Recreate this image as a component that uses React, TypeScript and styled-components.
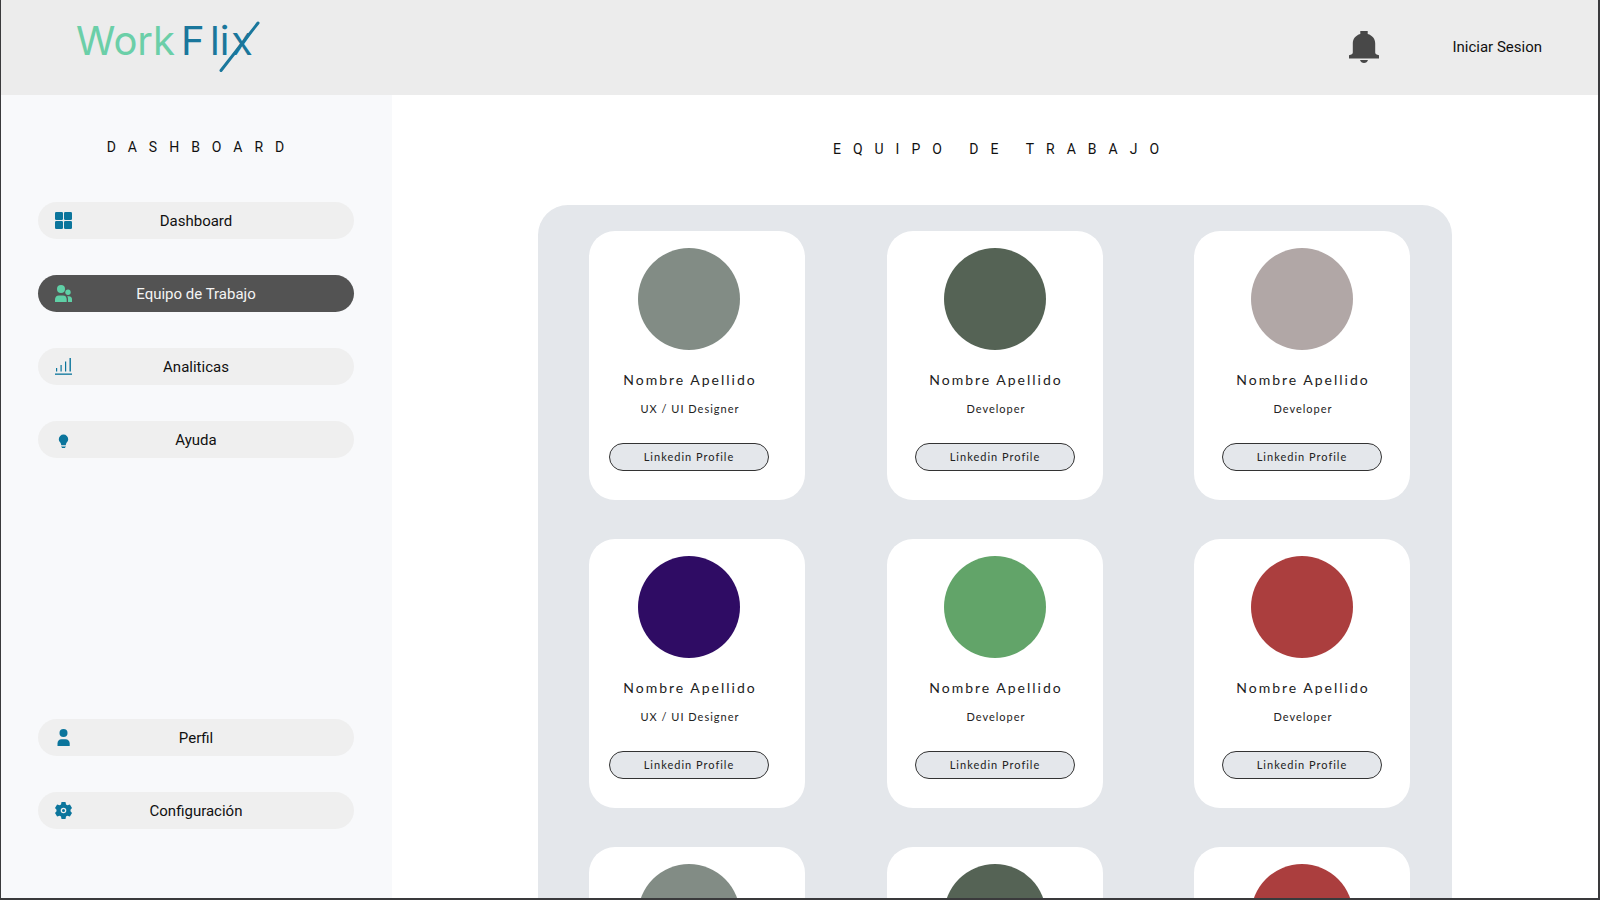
import React from 'react';
import styled, { createGlobalStyle } from 'styled-components';

const GlobalStyle = createGlobalStyle`
  * { box-sizing: border-box; }
  html, body { margin: 0; }
  body {
    font-family: Roboto, "Liberation Sans", sans-serif;
    color: #111;
    background: #fff;
  }
`;

const Page = styled.div`
  display: flex;
  flex-direction: column;
  height: 100vh;
  overflow: hidden;
  border: solid #3a3a3c;
  border-width: 0 2px 2px 1px;
`;

const Header = styled.header`
  display: flex;
  align-items: center;
  flex: none;
  height: 95px;
  padding: 0 56px 2px 71px;
  background: #ececec;
`;

const Brand = styled.a`
  display: flex;
  margin-right: auto;
`;

const LogoText = styled.text`
  font-family: Inter, Lato, sans-serif;
  font-size: 40px;
  font-weight: 400;
`;

const BellButton = styled.button`
  display: flex;
  margin-right: 73px;
  padding: 0;
  border: 0;
  background: none;
`;

const LoginLink = styled.a`
  font-size: 15px;
  line-height: 20px;
  color: #111;
  text-decoration: none;
`;

const Body = styled.div`
  display: flex;
  flex: 1;
  min-height: 0;
`;

const Sidebar = styled.aside`
  display: flex;
  flex-direction: column;
  flex: none;
  width: 391px;
  padding: 42px 38px 69px 37px;
  background: #f8f9fb;
`;

const SidebarTitle = styled.h2`
  margin: 0 0 45px;
  padding-left: 11px;
  font-size: 14px;
  line-height: 20px;
  font-weight: 400;
  letter-spacing: 12px;
  text-align: center;
`;

const Nav = styled.nav`
  display: flex;
  flex-direction: column;
  flex: 1;
  gap: 36px;
`;

const NavItem = styled.a<{ $active?: boolean; $pushDown?: boolean }>`
  display: flex;
  align-items: center;
  height: 37px;
  margin-top: ${(p) => (p.$pushDown ? 'auto' : '0')};
  padding: 0 17px;
  border-radius: 19px;
  background: ${(p) => (p.$active ? '#535353' : '#efefef')};
  color: ${(p) => (p.$active ? '#f4f4f4' : '#111')};
  font-size: 15px;
  line-height: 20px;
  text-decoration: none;

  svg {
    flex: none;
    fill: ${(p) => (p.$active ? '#5fd0a6' : '#0b759c')};
  }
`;

const NavLabel = styled.span`
  flex: 1;
  padding-right: 17px;
  text-align: center;
`;

const Main = styled.main`
  flex: 1;
  overflow: hidden;
  padding-top: 44px;
`;

const MainTitle = styled.h1`
  margin: 0 0 46px;
  padding-left: 14px;
  font-size: 14px;
  line-height: 20px;
  font-weight: 400;
  letter-spacing: 12px;
  text-align: center;
`;

const TeamPanel = styled.section`
  display: grid;
  grid-template-columns: 298fr 307fr 216fr;
  row-gap: 39px;
  max-width: 914px;
  margin: 0 auto;
  padding: 26px 42px 39px 51px;
  border-radius: 30px;
  background: #e4e7eb;
`;

const Card = styled.article`
  display: flex;
  flex-direction: column;
  align-items: center;
  width: 216px;
  height: 269px;
  padding-top: 17px;
  border-radius: 26px;
  background: #fff;
  font-family: Lato, "Noto Sans", sans-serif;
  color: #222;

  &:nth-child(3n + 1) {
    padding-right: 16px;
  }
`;

const Avatar = styled.div<{ $color: string }>`
  flex: none;
  width: 102px;
  height: 102px;
  border-radius: 50%;
  background: ${(p) => p.$color};
`;

const Name = styled.h3`
  margin: 20px 0 0;
  padding-left: 2px;
  font-size: 14px;
  line-height: 20px;
  font-weight: 400;
  letter-spacing: 2px;
`;

const Role = styled.p`
  margin: 9px 0 0;
  padding-left: 2px;
  font-size: 11px;
  line-height: 20px;
  letter-spacing: 1px;
`;

const ProfileButton = styled.button`
  width: 160px;
  height: 28px;
  margin-top: 24px;
  padding: 0;
  border: 1px solid #333;
  border-radius: 14px;
  background: #e4e7eb;
  color: #222;
  font-family: inherit;
  font-size: 11px;
  line-height: 20px;
  letter-spacing: 1px;
`;

const Logo = () => (
  <svg width="190" height="80" viewBox="72 7 190 80" role="img" aria-label="WorkFlix">
    <LogoText x="76" y="55" fill="#6bcfa8">Work</LogoText>
    <LogoText y="55" fill="#1a779c">
      <tspan x="181">F</tspan>
      <tspan x="210">li</tspan>
      <tspan x="231">x</tspan>
    </LogoText>
    <path d="M221 70.500L258 23" stroke="#1a779c" strokeWidth="3" strokeLinecap="round" />
  </svg>
);

const BellIcon = () => (
  <svg width="30" height="32" viewBox="0 0 30 32" fill="#484848" aria-hidden="true">
    <path d="M11.300 0H18.700V3C23.500 4.300 26.200 8 26.200 12.500V21.500C26.200 23 27.500 23.600 30 24.300V27.500H0V24.300C2.500 23.600 3.800 23 3.800 21.500V12.500C3.800 8 6.500 4.300 11.300 3Z" />
    <path d="M11 29H19C18.400 31 17 32 15 32S11.600 31 11 29Z" />
  </svg>
);

const NavSvg = ({ children }: { children: React.ReactNode }) => (
  <svg width="17" height="17" viewBox="0 0 17 17" aria-hidden="true">{children}</svg>
);

const GridIcon = () => (
  <NavSvg>
    <rect x="0" y="0" width="8" height="8" rx="1.300" />
    <rect x="9" y="0" width="8" height="8" rx="1.300" />
    <rect x="0" y="9" width="8" height="8" rx="1.300" />
    <rect x="9" y="9" width="8" height="8" rx="1.300" />
  </NavSvg>
);

const TeamIcon = () => (
  <NavSvg>
    <circle cx="6" cy="4" r="4" />
    <circle cx="13" cy="7.200" r="2.700" />
    <path d="M0 17V14.500C0 12 1.500 10.400 4 10.400H8C10.500 10.400 11.700 12 11.700 14.500V17Z" />
    <path d="M13 17V14C13 12.700 12.700 11.800 12.200 11.200H14C16 11.200 17 12.500 17 14.300V17Z" />
  </NavSvg>
);

const ChartIcon = () => (
  <NavSvg>
    <rect x="0" y="15.500" width="17" height="1.300" />
    <rect x="1" y="10" width="1.200" height="3.500" />
    <rect x="5.500" y="7" width="1.200" height="6.500" />
    <rect x="10" y="3.500" width="1.200" height="10" />
    <rect x="14.500" y="0" width="1.400" height="13.500" />
  </NavSvg>
);

const BulbIcon = () => (
  <NavSvg>
    <path d="M8.500 3.500A4.700 4.700 0 0 1 13.200 8.200C13.200 10 12 11 11.400 12C11 12.700 11 13.500 10.800 14H6.200C6 13.500 6 12.700 5.600 12C5 11 3.800 10 3.800 8.200A4.700 4.700 0 0 1 8.500 3.500Z" />
    <path d="M6.200 14.700H10.800V15.500H6.200ZM6.800 16H10.200V17H6.800Z" />
  </NavSvg>
);

const UserIcon = () => (
  <NavSvg>
    <circle cx="8.500" cy="4" r="4" />
    <path d="M2.500 17V14.500C2.500 12 4 10.300 6.500 10.300H10.500C13 10.300 14.700 12 14.700 14.500V17Z" />
  </NavSvg>
);

const GearIcon = () => (
  <NavSvg>
    <path
      fillRule="evenodd"
      d="M6.500 0H10.500L11 2.600L12.300 3.300L14.900 2.400L17 5.900L15.500 7.700V9.300L17 11.100L14.900 14.600L12.300 13.700L11 14.400L10.500 17H6.500L6 14.400L4.700 13.700L2.100 14.600L0 11.100L1.500 9.300V7.700L0 5.900L2.100 2.400L4.700 3.300L6 2.600ZM8.500 5.700A2.800 2.800 0 1 0 8.500 11.300A2.800 2.800 0 1 0 8.500 5.700ZM8.500 7A1.500 1.500 0 1 1 8.500 10A1.500 1.500 0 1 1 8.500 7Z"
    />
  </NavSvg>
);

const navItems = [
  { label: 'Dashboard', Icon: GridIcon },
  { label: 'Equipo de Trabajo', Icon: TeamIcon, active: true },
  { label: 'Analiticas', Icon: ChartIcon },
  { label: 'Ayuda', Icon: BulbIcon },
  { label: 'Perfil', Icon: UserIcon, pushDown: true },
  { label: 'Configuración', Icon: GearIcon },
];

const team = [
  { role: 'UX / UI Designer', color: '#828c85' },
  { role: 'Developer', color: '#556355' },
  { role: 'Developer', color: '#b1a7a6' },
  { role: 'UX / UI Designer', color: '#2f0c64' },
  { role: 'Developer', color: '#62a469' },
  { role: 'Developer', color: '#ab3e3e' },
  { role: 'UX / UI Designer', color: '#828c85' },
  { role: 'Developer', color: '#556355' },
  { role: 'Developer', color: '#ab3e3e' },
];

export default function App() {
  return (
    <>
      <GlobalStyle />
      <Page>
        <Header>
          <Brand href="#"><Logo /></Brand>
          <BellButton type="button" aria-label="Notificaciones"><BellIcon /></BellButton>
          <LoginLink href="#">Iniciar Sesion</LoginLink>
        </Header>
        <Body>
          <Sidebar>
            <SidebarTitle>DASHBOARD</SidebarTitle>
            <Nav>
              {navItems.map(({ label, Icon, active, pushDown }) => (
                <NavItem key={label} href="#" $active={active} $pushDown={pushDown}>
                  <Icon />
                  <NavLabel>{label}</NavLabel>
                </NavItem>
              ))}
            </Nav>
          </Sidebar>
          <Main>
            <MainTitle>EQUIPO DE TRABAJO</MainTitle>
            <TeamPanel>
              {team.map((member, i) => (
                <Card key={i}>
                  <Avatar $color={member.color} />
                  <Name>Nombre Apellido</Name>
                  <Role>{member.role}</Role>
                  <ProfileButton type="button">Linkedin Profile</ProfileButton>
                </Card>
              ))}
            </TeamPanel>
          </Main>
        </Body>
      </Page>
    </>
  );
}
